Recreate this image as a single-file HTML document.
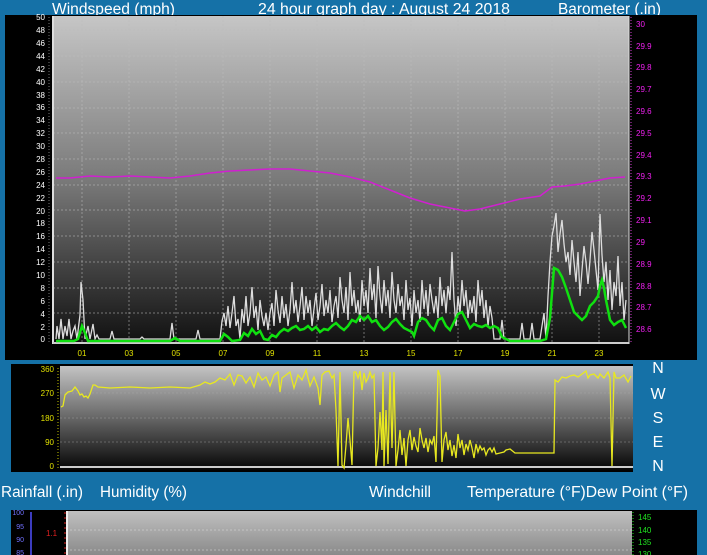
<!DOCTYPE html>
<html><head><meta charset="utf-8"><style>
html,body{margin:0;padding:0;background:#1571a7;width:707px;height:555px;overflow:hidden}
svg{display:block}
text{font-family:"Liberation Sans",sans-serif}
</style></head><body>
<svg width="707" height="555" xmlns="http://www.w3.org/2000/svg">
<defs>
<linearGradient id="g1" x1="0" y1="0" x2="0" y2="1"><stop offset="0" stop-color="#c6c6c6"/><stop offset="0.5" stop-color="#7a7a7a"/><stop offset="1" stop-color="#111"/></linearGradient>
<linearGradient id="g2" x1="0" y1="0" x2="0" y2="1"><stop offset="0" stop-color="#c4c4c4"/><stop offset="0.45" stop-color="#707070"/><stop offset="1" stop-color="#050505"/></linearGradient>
<linearGradient id="g3" x1="0" y1="0" x2="0" y2="1"><stop offset="0" stop-color="#c0c0c0"/><stop offset="1" stop-color="#8a8a8a"/></linearGradient>
</defs>
<rect width="707" height="555" fill="#1571a7"/>
<!-- header -->
<text x="52" y="14" fill="#fff" font-size="15.5" textLength="123" lengthAdjust="spacingAndGlyphs">Windspeed (mph)</text>
<text x="258" y="14" fill="#fff" font-size="15.5" textLength="252" lengthAdjust="spacingAndGlyphs">24 hour graph day : August 24 2018</text>
<text x="558" y="14" fill="#fff" font-size="15.5" textLength="103" lengthAdjust="spacingAndGlyphs">Barometer (.in)</text>
<!-- main panel -->
<rect x="5" y="15" width="692" height="345" fill="#000"/>
<rect x="53" y="16" width="576" height="327" fill="url(#g1)"/>
<g stroke="#bbb" stroke-opacity="0.55" stroke-width="1" stroke-dasharray="2,2">
<path d="M53 30H629M53 56H629M53 82H629M53 108H629M53 133H629M53 159H629M53 185H629M53 210H629M53 236H629M53 262H629M53 288H629M53 313H629"/>
<path d="M82 16V343M129 16V343M176 16V343M223 16V343M270 16V343M317 16V343M364 16V343M411 16V343M458 16V343M505 16V343M552 16V343M599 16V343"/>
</g>
<line x1="53" y1="16" x2="53" y2="344" stroke="#ddd" stroke-width="2"/>
<line x1="53" y1="343" x2="629" y2="343" stroke="#ccc" stroke-width="2"/>
<line x1="629" y1="16" x2="629" y2="344" stroke="#ddd" stroke-width="1"/>
<g fill="#fff" font-size="8" text-anchor="end">
<text x="45" y="20">50</text><text x="45" y="33">48</text><text x="45" y="46">46</text><text x="45" y="59">44</text><text x="45" y="72">42</text><text x="45" y="85">40</text><text x="45" y="98">38</text><text x="45" y="110">36</text><text x="45" y="123">34</text><text x="45" y="136">32</text><text x="45" y="149">30</text><text x="45" y="162">28</text><text x="45" y="175">26</text><text x="45" y="188">24</text><text x="45" y="201">22</text><text x="45" y="214">20</text><text x="45" y="226">18</text><text x="45" y="239">16</text><text x="45" y="252">14</text><text x="45" y="265">12</text><text x="45" y="278">10</text><text x="45" y="291">8</text><text x="45" y="304">6</text><text x="45" y="317">4</text><text x="45" y="330">2</text><text x="45" y="342">0</text>
</g>
<path d="M49 17V343" stroke="#777" stroke-dasharray="1,2"/>
<path d="M631 17V343" stroke="#d040d0" stroke-dasharray="1,2"/>
<g fill="#f020f0" font-size="8">
<text x="636" y="27">30</text><text x="636" y="49">29.9</text><text x="636" y="70">29.8</text><text x="636" y="92">29.7</text><text x="636" y="114">29.6</text><text x="636" y="136">29.5</text><text x="636" y="158">29.4</text><text x="636" y="179">29.3</text><text x="636" y="201">29.2</text><text x="636" y="223">29.1</text><text x="636" y="245">29</text><text x="636" y="267">28.9</text><text x="636" y="289">28.8</text><text x="636" y="310">28.7</text><text x="636" y="332">28.6</text>
</g>
<g fill="#e0e000" font-size="8" text-anchor="middle">
<text x="82" y="356">01</text><text x="129" y="356">03</text><text x="176" y="356">05</text><text x="223" y="356">07</text><text x="270" y="356">09</text><text x="317" y="356">11</text><text x="364" y="356">13</text><text x="411" y="356">15</text><text x="458" y="356">17</text><text x="505" y="356">19</text><text x="552" y="356">21</text><text x="599" y="356">23</text>
</g>
<!-- barometer -->
<polyline fill="none" stroke="#d020d0" stroke-width="1.5" points="56,178 70,178 90,176 110,177 130,176 150,177 170,178 190,176 210,173 230,171 250,170 270,169 290,169 310,171 330,173 350,177 370,182 390,190 410,198 430,204 450,208 465,211 480,209 500,204 520,199 540,196 552,187 565,186 580,184 595,181 610,178 625,177"/>
<!-- gust (white) -->
<polyline fill="none" stroke="#ddd" stroke-width="1.3" points="56,339 57,326 59,339 61,319 63,339 65,326 67,336 69,319 71,339 73,331 75,326 77,339 80,315 81,282 83,300 85,339 88,326 90,339 93,324 95,339 97,335 99,339 110,339 112,331 114,339 140,339 142,337 144,339 170,339 172,323 174,339 196,339 198,330 200,339 220,339 222,321 224,313 226,326 228,306 230,328 232,313 234,296 236,326 238,319 240,339 242,309 244,323 246,296 248,326 250,313 252,287 254,318 256,306 258,330 260,300 262,316 264,326 266,313 268,330 270,313 272,303 274,326 276,290 278,310 280,323 282,296 284,318 286,304 288,326 290,310 292,282 294,313 296,300 298,322 300,306 302,287 304,320 306,296 308,313 310,300 312,326 314,309 316,293 318,320 320,306 322,284 324,316 326,300 328,313 330,290 332,322 334,306 336,296 338,318 340,277 342,300 344,313 346,287 348,320 350,272 352,306 354,290 356,313 358,300 360,322 362,280 364,306 366,290 368,313 370,268 372,300 374,284 376,318 378,266 380,296 382,313 384,280 386,306 388,290 390,318 392,272 394,300 396,313 398,284 400,306 402,296 404,320 406,280 408,310 410,298 412,326 414,290 416,313 418,300 420,322 422,280 424,309 426,290 428,316 430,284 432,300 434,313 436,296 438,318 440,277 442,306 444,290 446,313 448,286 450,300 452,252 454,300 456,326 458,296 460,313 462,280 464,306 466,290 468,318 470,300 472,313 474,296 476,322 478,280 480,306 482,290 484,318 486,300 488,326 490,306 492,318 494,339 500,339 502,320 504,339 520,339 522,323 524,339 530,339 532,323 534,339 540,339 542,326 544,313 546,339 548,296 550,262 552,236 554,226 556,213 558,252 560,234 562,220 564,244 566,262 568,252 570,275 572,240 574,262 576,282 578,252 580,296 582,270 584,246 586,262 588,284 590,260 592,232 594,250 596,270 598,290 600,214 602,255 604,282 606,262 608,300 610,270 612,310 614,282 616,296 618,256 620,306 622,282 624,320 626,300"/>
<!-- average (green) -->
<polyline fill="none" stroke="#10e010" stroke-width="2.5" points="56,341 74,341 78,339 82,326 85,333 88,341 150,341 170,341 175,338 180,341 220,341 224,334 228,337 232,341 240,340 244,333 248,336 252,329 256,334 260,331 264,339 268,340 272,335 276,337 280,332 284,329 288,331 292,328 296,326 300,330 304,329 308,326 312,330 316,327 320,332 324,329 328,330 332,326 336,323 340,327 344,330 348,326 352,320 356,322 360,316 364,320 368,316 372,322 376,320 380,326 384,330 388,327 392,322 396,319 400,324 404,328 408,330 412,332 414,336 418,322 422,318 426,320 430,326 434,330 438,320 442,318 446,326 450,330 454,322 458,314 462,312 466,320 470,328 474,324 478,326 482,327 486,325 490,328 494,326 498,328 502,337 510,341 540,341 546,339 550,318 554,268 558,270 562,277 566,288 570,300 574,312 578,316 582,320 586,316 590,306 594,302 598,296 600,286 602,280 604,288 606,300 610,320 614,325 618,322 622,320 626,328"/>
<!-- wind dir panel -->
<rect x="11" y="364" width="622" height="108" fill="#000"/>
<rect x="60" y="366" width="573" height="104" fill="url(#g2)"/>
<g stroke="#aaa" stroke-opacity="0.4" stroke-dasharray="2,2"><path d="M60 393H633M60 418H633M60 442H633"/></g>
<line x1="60" y1="467" x2="633" y2="467" stroke="#ccc" stroke-width="2"/>
<path d="M58 368V468" stroke="#c0c000" stroke-dasharray="1,2"/>
<g fill="#e0e000" font-size="8" text-anchor="end">
<text x="54" y="372">360</text><text x="54" y="396">270</text><text x="54" y="421">180</text><text x="54" y="445">90</text><text x="54" y="469">0</text>
</g>
<polyline fill="none" stroke="#e8e820" stroke-width="1.3" points="61,407 63,406 65,395 68,392 72,391 75,387 78,391 80,395 82,394 84,397 86,396 88,398 90,394 93,385 95,385 98,387 110,388 130,387 150,388 170,387 190,388 200,385 205,382 210,384 215,382 220,378 225,380 230,374 234,385 238,375 242,376 246,383 250,377 254,387 258,373 262,380 266,377 270,386 274,375 278,372 280,392 282,378 286,375 290,372 294,388 298,375 302,380 306,370 310,386 314,377 318,388 320,405 322,375 325,372 329,371 332,378 334,375 336,410 338,466 340,372 342,465 344,468 346,445 348,418 350,440 352,465 354,372 356,372 358,378 360,371 362,390 364,373 366,382 368,378 370,372 372,378 374,375 376,466 378,448 380,412 382,450 383,372 384,466 386,410 388,464 390,372 392,448 394,372 396,466 398,450 400,430 402,455 404,438 406,466 408,440 410,430 412,450 414,437 416,446 418,452 420,428 422,440 424,448 426,438 428,452 430,440 432,444 434,436 436,462 438,370 440,376 442,462 444,440 446,432 448,450 450,440 452,456 454,445 456,458 458,434 460,448 462,440 464,455 466,444 468,450 470,440 472,448 474,458 476,444 478,452 480,446 482,450 484,448 486,455 488,450 490,448 492,452 494,448 496,454 500,453 504,452 506,450 510,449 515,453 530,453 554,453 555,380 558,382 562,377 566,378 570,376 574,375 578,377 582,374 586,371 588,378 590,375 594,374 598,378 600,374 604,378 608,372 610,378 612,466 614,372 616,378 620,378 624,375 628,382 631,376"/>
<g fill="#fff" font-size="16" text-anchor="middle">
<text x="658" y="373">N</text><text x="658" y="399">W</text><text x="658" y="423">S</text><text x="658" y="447">E</text><text x="658" y="471">N</text>
</g>
<!-- bottom header -->
<g fill="#fff" font-size="15.5">
<text x="1" y="497" textLength="82" lengthAdjust="spacingAndGlyphs">Rainfall (.in)</text><text x="100" y="497" textLength="87" lengthAdjust="spacingAndGlyphs">Humidity (%)</text><text x="369" y="497" textLength="62" lengthAdjust="spacingAndGlyphs">Windchill</text><text x="467" y="497" textLength="221" lengthAdjust="spacingAndGlyphs">Temperature (°F)Dew Point (°F)</text>
</g>
<!-- bottom panel -->
<rect x="11" y="510" width="686" height="45" fill="#000"/>
<rect x="66" y="511" width="566" height="44" fill="url(#g3)"/>
<g stroke="#ddd" stroke-opacity="0.5" stroke-dasharray="2,2"><path d="M66 530H632M66 550H632"/></g>
<line x1="31" y1="512" x2="31" y2="555" stroke="#5050ff" stroke-width="1.5"/>
<line x1="67" y1="511" x2="67" y2="555" stroke="#eee" stroke-width="2"/>
<path d="M65 512V555" stroke="#e02020" stroke-dasharray="2,3"/>
<path d="M633 512V555" stroke="#20e020" stroke-dasharray="1,2"/>
<g fill="#7070ff" font-size="7" text-anchor="end">
<text x="24" y="515">100</text><text x="24" y="529">95</text><text x="24" y="542">90</text><text x="24" y="555">85</text>
</g>
<text x="46" y="536" fill="#e02020" font-size="8">1.1</text>
<g fill="#20e020" font-size="8">
<text x="638" y="520">145</text><text x="638" y="533">140</text><text x="638" y="545">135</text><text x="638" y="557">130</text>
</g>
</svg>
</body></html>
